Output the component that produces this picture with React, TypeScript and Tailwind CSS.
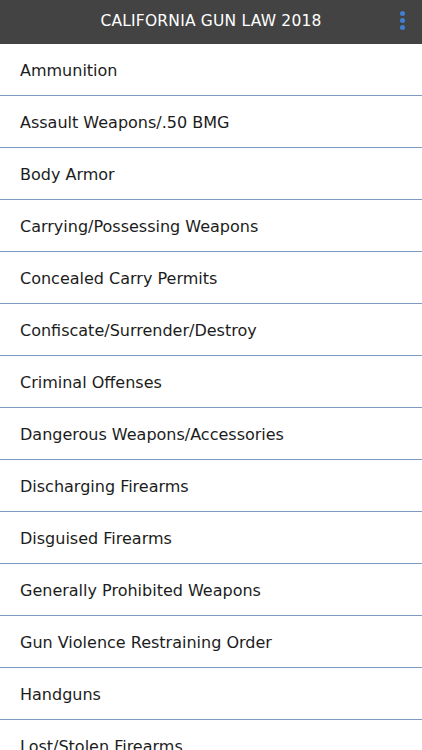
import React from "react";

const topics = [
  "Ammunition",
  "Assault Weapons/.50 BMG",
  "Body Armor",
  "Carrying/Possessing Weapons",
  "Concealed Carry Permits",
  "Confiscate/Surrender/Destroy",
  "Criminal Offenses",
  "Dangerous Weapons/Accessories",
  "Discharging Firearms",
  "Disguised Firearms",
  "Generally Prohibited Weapons",
  "Gun Violence Restraining Order",
  "Handguns",
  "Lost/Stolen Firearms",
];

export default function App(): JSX.Element {
  return (
    <div className="h-[750px] w-[422px] overflow-hidden bg-white font-['DejaVu_Sans',sans-serif]">
      <header className="relative flex h-[44px] items-center justify-center bg-[#434343]">
        <h1 className="text-[15.5px] tracking-[0.2px] text-white">CALIFORNIA GUN LAW 2018</h1>
        <div className="absolute right-[17px] top-[11px] flex flex-col gap-[2px]">
          <span className="h-[5px] w-[5px] rounded-full bg-[#3f7fd4]" />
          <span className="h-[5px] w-[5px] rounded-full bg-[#3f7fd4]" />
          <span className="h-[5px] w-[5px] rounded-full bg-[#3f7fd4]" />
        </div>
      </header>
      <ul>
        {topics.map((t) => (
          <li
            key={t}
            className="flex h-[52px] items-center border-b border-[#7d9cc4] pl-[20px] pt-[2px] text-[16px] text-[#1c1c1c]"
          >
            {t}
          </li>
        ))}
      </ul>
    </div>
  );
}
